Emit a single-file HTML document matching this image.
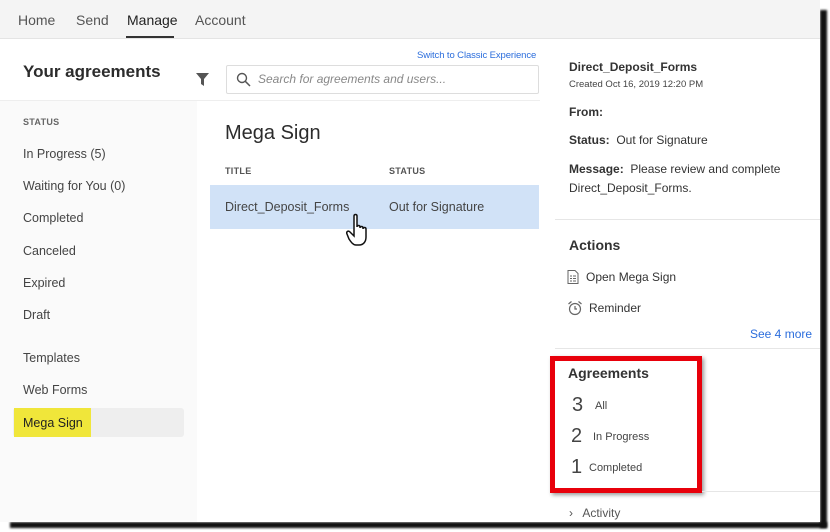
<!DOCTYPE html>
<html><head><meta charset="utf-8"><style>
*{margin:0;padding:0;box-sizing:border-box}
body{width:830px;height:532px;background:#fff;font-family:"Liberation Sans",sans-serif;color:#2c2c2c;position:relative;overflow:hidden}
.a{position:absolute;white-space:nowrap}
.frame{position:absolute;left:0;top:0;width:820px;height:522px;background:#fff;overflow:hidden}
.sh1{position:absolute;left:820px;top:10px;width:7px;height:518px;background:#111;filter:blur(1px)}
.sh2{position:absolute;left:10px;top:522px;width:817px;height:6px;background:#111;filter:blur(1px)}
.nav{position:absolute;left:0;top:0;width:820px;height:39px;background:#f4f4f4;border-bottom:1px solid #e4e4e4}
.nav span{position:absolute;top:12px;font-size:14px;color:#555}
.side{position:absolute;left:0;top:101px;width:197px;height:421px;background:#fafafa}
.s{font-size:12.5px;color:#444}
.r{font-size:12px;color:#333}
.hr{position:absolute;height:1px;background:#e6e6e6}
</style></head><body>
<div class="sh1"></div><div class="sh2"></div>
<div class="frame">
<div class="nav">
<span style="left:18px">Home</span><span style="left:76px">Send</span>
<span style="left:127px;color:#222">Manage</span><span style="left:195px">Account</span>
<div class="a" style="left:126px;top:36px;width:48px;height:2px;background:#333"></div>
</div>
<div class="a" style="left:23px;top:62px;font-size:17px;font-weight:bold;color:#2c2c2c">Your agreements</div>
<svg class="a" style="left:195px;top:72px" width="15" height="15" viewBox="0 0 15 15"><path d="M1 1h13L9 7v7L6 12V7z" fill="#555"/></svg>
<div class="a" style="left:226px;top:65px;width:313px;height:29px;border:1px solid #ddd;border-radius:2px"></div>
<svg class="a" style="left:236px;top:72px" width="15" height="15" viewBox="0 0 15 15"><circle cx="6" cy="6" r="4.5" fill="none" stroke="#555" stroke-width="1.4"/><path d="M9.3 9.3L14 14" stroke="#555" stroke-width="1.5"/></svg>
<div class="a" style="left:258px;top:72px;font-size:12px;font-style:italic;color:#888">Search for agreements and users...</div>
<div class="a" style="left:417px;top:50px;font-size:9.5px;color:#2b6ddc;letter-spacing:-.1px">Switch to Classic Experience</div>
<div class="side"></div>
<div class="hr" style="left:0;top:100px;width:540px;background:#eee"></div>
<div class="a" style="left:23px;top:117px;font-size:9px;color:#666;font-weight:bold;letter-spacing:.3px">STATUS</div>
<div class="a s" style="left:23px;top:147px">In Progress (5)</div>
<div class="a s" style="left:23px;top:179px">Waiting for You (0)</div>
<div class="a s" style="left:23px;top:211px">Completed</div>
<div class="a s" style="left:23px;top:244px">Canceled</div>
<div class="a s" style="left:23px;top:276px">Expired</div>
<div class="a s" style="left:23px;top:308px">Draft</div>
<div class="a s" style="left:23px;top:351px">Templates</div>
<div class="a s" style="left:23px;top:383px">Web Forms</div>
<div class="a" style="left:13px;top:408px;width:171px;height:29px;background:#eee;border-radius:3px"></div>
<div class="a" style="left:14px;top:408px;width:77px;height:29px;background:#f0e63a"></div>
<div class="a s" style="left:23px;top:416px;color:#222">Mega Sign</div>
<div class="a" style="left:225px;top:122px;font-size:20px;color:#2c2c2c">Mega Sign</div>
<div class="a" style="left:225px;top:166px;font-size:9px;font-weight:bold;color:#555;letter-spacing:.3px">TITLE</div>
<div class="a" style="left:389px;top:166px;font-size:9px;font-weight:bold;color:#555;letter-spacing:.3px">STATUS</div>
<div class="a" style="left:210px;top:185px;width:329px;height:44px;background:#d1e2f7"></div>
<div class="a s" style="left:225px;top:200px">Direct_Deposit_Forms</div>
<div class="a s" style="left:389px;top:200px">Out for Signature</div>
<svg class="a" style="left:346px;top:213px" width="28" height="34" viewBox="0 0 28 34"><path d="M8 3c0-2 3-2 3 0v11c0-2 3-2 3 0v1c0-2 3-2 3 0v1c0-2 3-2 3 0v8c0 4-2 8-7 8h-3c-3 0-5-3-7-6L1 21c-1-2 1-4 3-2l4 4z" fill="#fff" stroke="#111" stroke-width="1.5"/></svg>
<div class="a" style="left:569px;top:60px;font-size:12px;font-weight:bold;color:#333">Direct_Deposit_Forms</div>
<div class="a" style="left:569px;top:79px;font-size:9.5px;color:#444">Created Oct 16, 2019 12:20 PM</div>
<div class="a r" style="left:569px;top:105px;font-weight:bold">From:</div>
<div class="a r" style="left:569px;top:133px"><b>Status:</b>&nbsp; Out for Signature</div>
<div class="a r" style="left:569px;top:162px"><b>Message:</b>&nbsp; Please review and complete</div>
<div class="a r" style="left:569px;top:181px">Direct_Deposit_Forms.</div>
<div class="hr" style="left:555px;top:219px;width:265px"></div>
<div class="a" style="left:569px;top:237px;font-size:14px;font-weight:bold;color:#333">Actions</div>
<svg class="a" style="left:567px;top:270px" width="12" height="14" viewBox="0 0 12 14"><path d="M1 .5h7l3 3v10H1z" fill="none" stroke="#666"/><path d="M3 6h2M3 8.5h2M3 11h2M6 6h3M6 8.5h3M6 11h3" stroke="#666"/></svg>
<div class="a r" style="left:586px;top:270px">Open Mega Sign</div>
<svg class="a" style="left:567px;top:300px" width="16" height="16" viewBox="0 0 16 16"><circle cx="8" cy="9" r="5.5" fill="none" stroke="#666" stroke-width="1.2"/><path d="M8 6v3h2M1.5 4l3-2.5M14.5 4l-3-2.5" stroke="#666" stroke-width="1.2" fill="none"/></svg>
<div class="a r" style="left:589px;top:301px">Reminder</div>
<div class="a" style="left:750px;top:327px;font-size:12px;color:#2b6ddc">See 4 more</div>
<div class="hr" style="left:555px;top:348px;width:265px"></div>
<div class="a" style="left:568px;top:365px;font-size:14px;font-weight:bold;color:#333">Agreements</div>
<div class="a" style="left:572px;top:394px;font-size:20px;color:#444">3</div>
<div class="a" style="left:595px;top:400px;font-size:11px;color:#444">All</div>
<div class="a" style="left:571px;top:425px;font-size:20px;color:#444">2</div>
<div class="a" style="left:593px;top:431px;font-size:11px;color:#444">In Progress</div>
<div class="a" style="left:571px;top:456px;font-size:20px;color:#444">1</div>
<div class="a" style="left:589px;top:462px;font-size:11px;color:#444">Completed</div>
<div class="a" style="left:550px;top:356px;width:152px;height:137px;border:5px solid #e8000b;box-shadow:2px 2px 4px rgba(0,0,0,.4)"></div>
<div class="hr" style="left:702px;top:491px;width:118px"></div>
<div class="a r" style="left:569px;top:506px;color:#555">›&nbsp;&nbsp; Activity</div>
</div>
</body></html>
